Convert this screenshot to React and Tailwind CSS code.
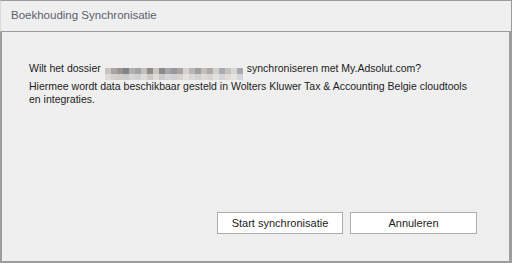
import React from "react";

// pixelated (blurred) dossier name
const topRow = [
  "bg-[#c8c4c2]", "bg-[#a9a6a6]", "bg-[#9a9593]", "bg-[#7d8589]", "bg-[#b2afae]", "bg-[#a4a2a3]",
  "bg-[#c2bfbc]", "bg-[#8f8a86]", "bg-[#c9c5c1]", "bg-[#8a8b8c]", "bg-[#a7a7a9]", "bg-[#97999c]",
  "bg-[#a8a3a0]", "bg-[#d6d3d0]", "bg-[#b9b6b4]", "bg-[#9d9ea0]", "bg-[#c1bebb]", "bg-[#aeaaa8]",
  "bg-[#d2cfcc]", "bg-[#a9abae]", "bg-[#c4c1bf]", "bg-[#d8d6d4]", "bg-[#a6aab0]",
];
const bottomRow = [
  "bg-[#dedcdb]", "bg-[#d4d2d1]", "bg-[#cfcccb]", "bg-[#c9cccd]", "bg-[#d8d6d5]", "bg-[#d2d1d1]",
  "bg-[#dddbd9]", "bg-[#cdcac8]", "bg-[#dfdcda]", "bg-[#cbcbcc]", "bg-[#d5d5d6]", "bg-[#d0d1d2]",
  "bg-[#d6d3d1]", "bg-[#e4e2e0]", "bg-[#dad8d7]", "bg-[#d1d2d3]", "bg-[#dddbd9]", "bg-[#d7d5d4]",
  "bg-[#e3e1df]", "bg-[#d4d5d7]", "bg-[#dedcdb]", "bg-[#e6e4e3]", "bg-[#d3d5d8]",
];

function Blurred() {
  return (
    <span className="inline-flex flex-col w-[138px] h-[12px] align-[-2px] mx-[4px]">
      <span className="flex h-[6px]">
        {topRow.map((c, i) => (
          <span key={i} className={`${c} w-[6px] h-full`} />
        ))}
      </span>
      <span className="flex h-[6px]">
        {bottomRow.map((c, i) => (
          <span key={i} className={`${c} w-[6px] h-full`} />
        ))}
      </span>
    </span>
  );
}

export default function App() {
  return (
    <div className="w-[512px] h-[263px] flex flex-col bg-[#efefef] font-['Liberation_Sans',Arial,sans-serif] text-[11px]">
      {/* title bar */}
      <div className="h-[32px] flex items-center pl-[10px] border-t border-r border-l border-b border-t-[#9c9c9c] border-r-[#9c9c9c] border-l-[#dadada] border-b-[#9c9c9c]">
        <span className="text-[#5e5e70] text-[11.5px]">Boekhouding Synchronisatie</span>
      </div>

      {/* body */}
      <div className="flex-1 flex flex-col border-l-2 border-r-[3px] border-b-[2px] border-[#9d9d9d]">
        <div className="pl-[27px] pt-[30px] text-[#1c1c1c] text-[10.5px] leading-[13px]">
          <p>
            Wilt het dossier<Blurred />synchroniseren met My.Adsolut.com?
          </p>
          <p>Hiermee wordt data beschikbaar gesteld in Wolters Kluwer Tax &amp; Accounting Belgie cloudtools</p>
          <p>en integraties.</p>
        </div>

        <div className="mt-auto mb-[27px] flex justify-end gap-[7px] pr-[32px]">
          <button className="w-[126px] h-[22px] bg-white border border-[#adadad] text-[#1c1c1c] text-[11px]">
            Start synchronisatie
          </button>
          <button className="w-[127px] h-[22px] bg-white border border-[#adadad] text-[#1c1c1c] text-[11px]">
            Annuleren
          </button>
        </div>
      </div>
    </div>
  );
}
